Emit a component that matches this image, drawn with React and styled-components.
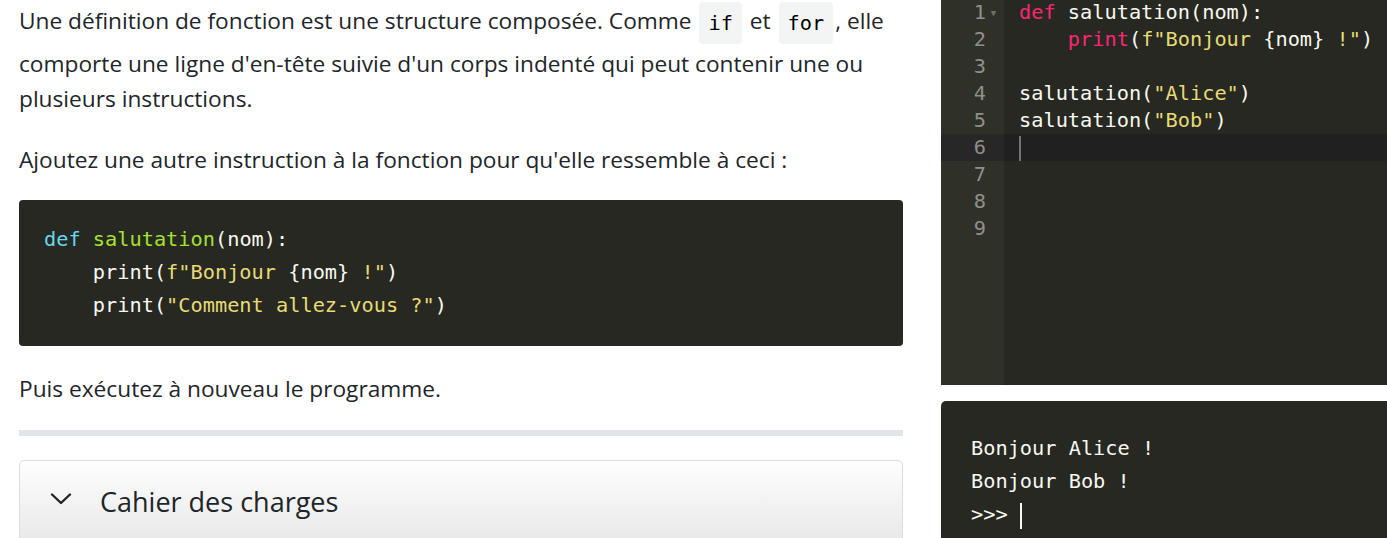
import React from "react";
import styled, { createGlobalStyle } from "styled-components";

const Global = createGlobalStyle`
  html, body { margin: 0; padding: 0; background: #fff; }
  body { overflow: hidden; }
  * { box-sizing: border-box; }
`;

const MONO = `"DejaVu Sans Mono", "Liberation Mono", monospace`;
const SANS = `"Open Sans", "Noto Sans", sans-serif`;

const Page = styled.div`
  display: flex;
  align-items: flex-start;
  width: 1387px;
  height: 538px;
  overflow: hidden;
`;

const Lesson = styled.div`
  width: 884px;
  margin-left: 19px;
  font-family: ${SANS};
  font-size: 22.7px;
  line-height: 35px;
  color: #212529;
`;

const Para = styled.p`
  margin: 0 0 ${(p) => p.$mb ?? 26}px;
`;

const InlineCode = styled.code`
  display: inline-block;
  font-family: ${MONO};
  font-size: 20.3px;
  line-height: 30px;
  padding: 6px 9px;
  color: #000;
  background: #f3f4f4;
  border-radius: 4px;
  vertical-align: middle;
  margin: 2px 2px;
`;

const CodeBlock = styled.pre`
  margin: 0 0 25px;
  padding: 23px 25px 24px;
  background: #272822;
  border-radius: 4px;
  font-family: ${MONO};
  font-size: 20.3px;
  line-height: 33px;
  color: #f8f8f2;
`;

const Tok = styled.span`
  color: ${(p) => p.$c};
`;

const Rule = styled.div`
  height: 6px;
  background: #e1e4e8;
  margin: 0 0 24px;
`;

const Accordion = styled.div`
  border: 1px solid #dcdcdc;
  border-radius: 5px;
  background: linear-gradient(#fefefe, #e8e8e8 82px);
  height: 100px;
`;

const AccHeader = styled.div`
  display: flex;
  align-items: center;
  height: 80px;
  padding-left: 30px;
  gap: 28px;
  font-size: 27px;
  color: #212529;
`;

const ChevronWrap = styled.span`
  display: flex;
  margin-bottom: 5px;
`;

const Side = styled.div`
  margin-left: 38px;
  width: 446px;
  display: flex;
  flex-direction: column;
  gap: 16px;
`;

const Editor = styled.div`
  display: flex;
  height: 385px;
  background: #272822;
  overflow: hidden;
  font-family: ${MONO};
  font-size: 20.3px;
  line-height: 27px;
`;

const Gutter = styled.div`
  width: 63px;
  flex: none;
  background: #2f3129;
  margin-top: -1px;
`;

const GutterRow = styled.div`
  display: flex;
  justify-content: flex-end;
  align-items: center;
  height: 27px;
  padding-right: 3px;
  color: #8f908a;
  background: ${(p) => (p.$active ? "#272727" : "transparent")};
`;

const Fold = styled.span`
  width: 15px;
  text-align: center;
  font-size: 9px;
  color: #6f706a;
  line-height: 27px;
  padding-top: 1px;
`;

const Num = styled.span``;

const Lines = styled.div`
  flex: 1;
  margin-top: -1px;
`;

const Line = styled.div`
  height: 27px;
  white-space: pre;
  padding-left: 15px;
  color: #f8f8f2;
  background: ${(p) => (p.$active ? "#202020" : "transparent")};
`;

const Caret = styled.span`
  display: inline-block;
  width: 2px;
  height: ${(p) => p.$h || 25}px;
  background: ${(p) => p.$c || "#75756f"};
  vertical-align: middle;
`;

const Console = styled.div`
  height: 140px;
  background: #272822;
  border-top-left-radius: 5px;
  padding: 31px 30px 0;
  font-family: ${MONO};
  font-size: 20.3px;
  line-height: 33px;
  color: #f8f8f2;
`;

const ConsoleLine = styled.div`
  white-space: pre;
  height: 33px;
`;

const Chevron = () => (
  <svg width="22" height="12" viewBox="0 0 22 12" fill="none">
    <path d="M2 1.5 L11 10 L20 1.5" stroke="#212529" strokeWidth="2.4" strokeLinecap="round" strokeLinejoin="round" />
  </svg>
);

const CY = "#66d9ef";
const GR = "#a6e22e";
const YE = "#e6db74";
const PK = "#f92672";

export default function App() {
  const gutter = [1, 2, 3, 4, 5, 6, 7, 8, 9];
  return (
    <>
      <Global />
      <Page>
        <Lesson>
          <Para>
            Une définition de fonction est une structure composée. Comme <InlineCode>if</InlineCode> et{" "}
            <InlineCode>for</InlineCode>, elle comporte une ligne d'en-tête suivie d'un corps indenté qui peut
            contenir une ou plusieurs instructions.
          </Para>
          <Para $mb={23}>Ajoutez une autre instruction à la fonction pour qu'elle ressemble à ceci :</Para>
          <CodeBlock>
            <Tok $c={CY}>def</Tok> <Tok $c={GR}>salutation</Tok>(nom):{"\n"}
            {"    "}print(<Tok $c={YE}>f"Bonjour </Tok>{"{nom}"}<Tok $c={YE}> !"</Tok>){"\n"}
            {"    "}print(<Tok $c={YE}>"Comment allez-vous ?"</Tok>)
          </CodeBlock>
          <Para $mb={24}>Puis exécutez à nouveau le programme.</Para>
          <Rule />
          <Accordion>
            <AccHeader>
              <ChevronWrap>
                <Chevron />
              </ChevronWrap>
              <span>Cahier des charges</span>
            </AccHeader>
          </Accordion>
        </Lesson>
        <Side>
          <Editor>
            <Gutter>
              {gutter.map((n) => (
                <GutterRow key={n} $active={n === 6}>
                  <Num>{n}</Num>
                  <Fold>{n === 1 ? "▼" : ""}</Fold>
                </GutterRow>
              ))}
            </Gutter>
            <Lines>
              <Line>
                <Tok $c={PK}>def</Tok> salutation(nom):
              </Line>
              <Line>
                {"    "}
                <Tok $c={PK}>print</Tok>(<Tok $c={YE}>f"Bonjour </Tok>{"{nom}"}<Tok $c={YE}> !"</Tok>)
              </Line>
              <Line />
              <Line>
                salutation(<Tok $c={YE}>"Alice"</Tok>)
              </Line>
              <Line>
                salutation(<Tok $c={YE}>"Bob"</Tok>)
              </Line>
              <Line $active>
                <Caret />
              </Line>
              <Line />
              <Line />
              <Line />
            </Lines>
          </Editor>
          <Console>
            <ConsoleLine>Bonjour Alice !</ConsoleLine>
            <ConsoleLine>Bonjour Bob !</ConsoleLine>
            <ConsoleLine>
              {">>> "}
              <Caret $c="#f8f8f2" $h={26} />
            </ConsoleLine>
          </Console>
        </Side>
      </Page>
    </>
  );
}
